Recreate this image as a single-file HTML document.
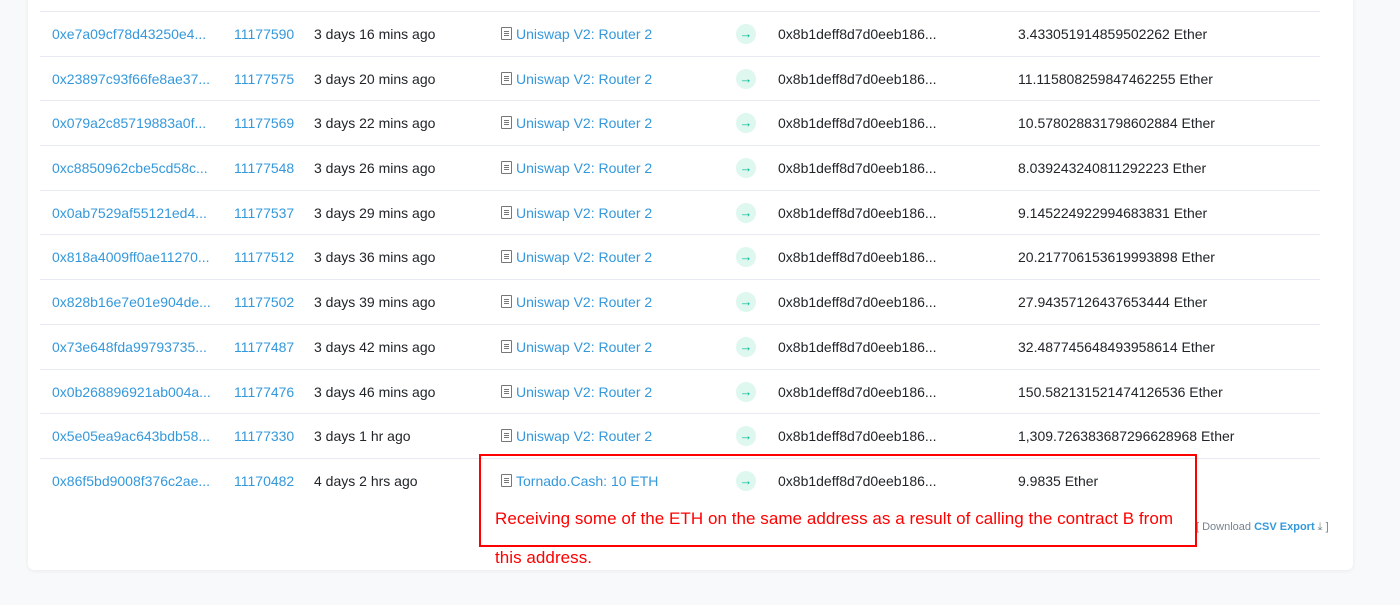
<!DOCTYPE html>
<html><head><style>
body{margin:0;width:1400px;height:605px;background:#f8f9fa;font-family:"Liberation Sans",Arial,sans-serif;font-size:14px;color:#212529;position:relative;overflow:hidden}
.card{position:absolute;left:28px;top:-10px;width:1325px;height:580px;background:#fff;border-radius:6px;box-shadow:0 1px 4px rgba(0,0,0,.06)}
.row{position:absolute;left:40px;width:1280px;height:44px;border-top:1px solid #e7eaf3}
.row span{position:absolute;top:0;line-height:44px;white-space:nowrap}
.c1{left:12px;color:#3498db}.c2{left:194px;color:#3498db}.c3{left:274px}
.c4{left:461px;color:#3498db}.c6{left:738px}.c7{left:978px}
.ar{position:absolute;left:696px;top:12px;width:20px;height:20px;border-radius:50%;background:#def7ef;color:#00b894;font-size:13px;text-align:center;line-height:19px;font-weight:bold;font-style:normal}
.doc{display:inline-block;width:9px;height:11px;border:1px solid #777;border-radius:1px;margin-right:4px;vertical-align:-1px;background:linear-gradient(#777,#777) 2px 3px/5px 1px no-repeat,linear-gradient(#777,#777) 2px 5px/5px 1px no-repeat,linear-gradient(#777,#777) 2px 7px/5px 1px no-repeat}
.box{position:absolute;left:479px;top:454px;width:714px;height:89px;border:2px solid #f00}
.note{position:absolute;left:495px;color:#f00;font-size:17px;letter-spacing:0.05px}
.dl{position:absolute;left:1196px;top:521px;font-size:11px;color:#77838f}
.dl b{color:#3498db;font-weight:bold}
</style></head><body>
<div class="card"></div>
<div class="row" style="top:11px"><span class="c1">0xe7a09cf78d43250e4...</span><span class="c2">11177590</span><span class="c3">3 days 16 mins ago</span><span class="c4"><i class="doc"></i>Uniswap V2: Router 2</span><i class="ar">→</i><span class="c6">0x8b1deff8d7d0eeb186...</span><span class="c7">3.433051914859502262 Ether</span></div>
<div class="row" style="top:56px"><span class="c1">0x23897c93f66fe8ae37...</span><span class="c2">11177575</span><span class="c3">3 days 20 mins ago</span><span class="c4"><i class="doc"></i>Uniswap V2: Router 2</span><i class="ar">→</i><span class="c6">0x8b1deff8d7d0eeb186...</span><span class="c7">11.115808259847462255 Ether</span></div>
<div class="row" style="top:100px"><span class="c1">0x079a2c85719883a0f...</span><span class="c2">11177569</span><span class="c3">3 days 22 mins ago</span><span class="c4"><i class="doc"></i>Uniswap V2: Router 2</span><i class="ar">→</i><span class="c6">0x8b1deff8d7d0eeb186...</span><span class="c7">10.578028831798602884 Ether</span></div>
<div class="row" style="top:145px"><span class="c1">0xc8850962cbe5cd58c...</span><span class="c2">11177548</span><span class="c3">3 days 26 mins ago</span><span class="c4"><i class="doc"></i>Uniswap V2: Router 2</span><i class="ar">→</i><span class="c6">0x8b1deff8d7d0eeb186...</span><span class="c7">8.039243240811292223 Ether</span></div>
<div class="row" style="top:190px"><span class="c1">0x0ab7529af55121ed4...</span><span class="c2">11177537</span><span class="c3">3 days 29 mins ago</span><span class="c4"><i class="doc"></i>Uniswap V2: Router 2</span><i class="ar">→</i><span class="c6">0x8b1deff8d7d0eeb186...</span><span class="c7">9.145224922994683831 Ether</span></div>
<div class="row" style="top:234px"><span class="c1">0x818a4009ff0ae11270...</span><span class="c2">11177512</span><span class="c3">3 days 36 mins ago</span><span class="c4"><i class="doc"></i>Uniswap V2: Router 2</span><i class="ar">→</i><span class="c6">0x8b1deff8d7d0eeb186...</span><span class="c7">20.217706153619993898 Ether</span></div>
<div class="row" style="top:279px"><span class="c1">0x828b16e7e01e904de...</span><span class="c2">11177502</span><span class="c3">3 days 39 mins ago</span><span class="c4"><i class="doc"></i>Uniswap V2: Router 2</span><i class="ar">→</i><span class="c6">0x8b1deff8d7d0eeb186...</span><span class="c7">27.94357126437653444 Ether</span></div>
<div class="row" style="top:324px"><span class="c1">0x73e648fda99793735...</span><span class="c2">11177487</span><span class="c3">3 days 42 mins ago</span><span class="c4"><i class="doc"></i>Uniswap V2: Router 2</span><i class="ar">→</i><span class="c6">0x8b1deff8d7d0eeb186...</span><span class="c7">32.487745648493958614 Ether</span></div>
<div class="row" style="top:369px"><span class="c1">0x0b268896921ab004a...</span><span class="c2">11177476</span><span class="c3">3 days 46 mins ago</span><span class="c4"><i class="doc"></i>Uniswap V2: Router 2</span><i class="ar">→</i><span class="c6">0x8b1deff8d7d0eeb186...</span><span class="c7">150.582131521474126536 Ether</span></div>
<div class="row" style="top:413px"><span class="c1">0x5e05ea9ac643bdb58...</span><span class="c2">11177330</span><span class="c3">3 days 1 hr ago</span><span class="c4"><i class="doc"></i>Uniswap V2: Router 2</span><i class="ar">→</i><span class="c6">0x8b1deff8d7d0eeb186...</span><span class="c7">1,309.726383687296628968 Ether</span></div>
<div class="row" style="top:458px"><span class="c1">0x86f5bd9008f376c2ae...</span><span class="c2">11170482</span><span class="c3">4 days 2 hrs ago</span><span class="c4"><i class="doc"></i>Tornado.Cash: 10 ETH</span><i class="ar">→</i><span class="c6">0x8b1deff8d7d0eeb186...</span><span class="c7">9.9835 Ether</span></div>
<div class="dl">[ Download <b>CSV Export</b> &#x2913; ]</div>
<div class="box"></div>
<div class="note" style="top:509px">Receiving some of the ETH on the same address as a result of calling the contract B from</div>
<div class="note" style="top:548px">this address.</div>
</body></html>
